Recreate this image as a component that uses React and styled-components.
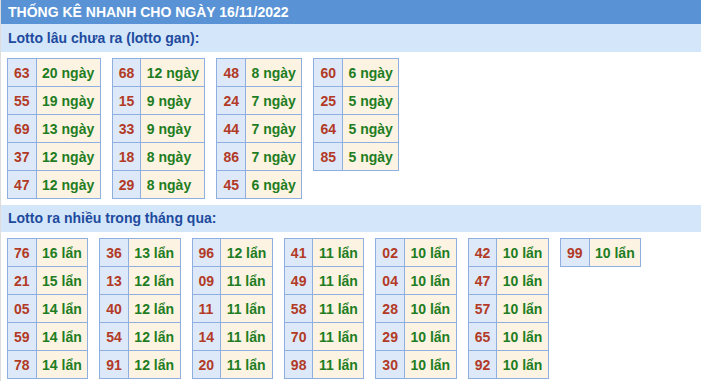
import React from 'react';
import styled, { createGlobalStyle } from 'styled-components';

const GlobalStyle = createGlobalStyle`
  body {
    margin: 0;
    background: #fff;
    font-family: "Liberation Sans", Arial, sans-serif;
  }
`

const Wrapper = styled.div`
  width: 701px;
  border-left: 1px solid #dcdcdc;
  box-sizing: border-box;
`

const Header = styled.div`
  height: 24px;
  line-height: 24px;
  padding-left: 7px;
  background: #5993d5;
  color: #fff;
  font-size: 14px;
  font-weight: bold;
  text-transform: uppercase;
`

const SectionTitle = styled.div`
  height: ${({ h }) => h || 28}px;
  line-height: ${({ h }) => h || 28}px;
  padding-left: 7px;
  background: #d4e6f9;
  color: #1e4b9e;
  font-size: 14px;
  font-weight: bold;
`

const Tables = styled.div`
  display: flex;
  flex-wrap: wrap;
  align-items: flex-start;
  gap: 11px;
  padding: 6px 0 6px 6px;
`

const Table = styled.table`
  border-collapse: collapse;
  font-size: 14px;
  font-weight: bold;
`

const Cell = styled.td`
  height: 27px;
  padding: 0 ${({ num }) => (num ? 6 : 5.5)}px;
  border: 1px solid #8eafe0;
  white-space: nowrap;
  background: ${({ num }) => (num ? '#dde9f9' : '#fdf3e2')};
  color: ${({ num }) => (num ? '#b23a26' : '#1e7d22')};
`

const gan = [
  [['63', 20], ['55', 19], ['69', 13], ['37', 12], ['47', 12]],
  [['68', 12], ['15', 9], ['33', 9], ['18', 8], ['29', 8]],
  [['48', 8], ['24', 7], ['44', 7], ['86', 7], ['45', 6]],
  [['60', 6], ['25', 5], ['64', 5], ['85', 5]],
]

const nhieu = [
  [['76', 16], ['21', 15], ['05', 14], ['59', 14], ['78', 14]],
  [['36', 13], ['13', 12], ['40', 12], ['54', 12], ['91', 12]],
  [['96', 12], ['09', 11], ['11', 11], ['14', 11], ['20', 11]],
  [['41', 11], ['49', 11], ['58', 11], ['70', 11], ['98', 11]],
  [['02', 10], ['04', 10], ['28', 10], ['29', 10], ['30', 10]],
  [['42', 10], ['47', 10], ['57', 10], ['65', 10], ['92', 10]],
  [['99', 10]],
]

const StatTable = ({ rows, unit }) => (
  <Table>
    <tbody>
      {rows.map(([num, count]) => (
        <tr key={num}>
          <Cell num>{num}</Cell>
          <Cell>{count} {unit}</Cell>
        </tr>
      ))}
    </tbody>
  </Table>
)

const App = () => {
  return (
    <Wrapper>
      <GlobalStyle />
      <Header>Thống kê nhanh cho ngày 16/11/2022</Header>
      <SectionTitle>Lotto lâu chưa ra (lotto gan):</SectionTitle>
      <Tables>
        {gan.map((rows, i) => (
          <StatTable key={i} rows={rows} unit="ngày" />
        ))}
      </Tables>
      <SectionTitle h={27}>Lotto ra nhiều trong tháng qua:</SectionTitle>
      <Tables>
        {nhieu.map((rows, i) => (
          <StatTable key={i} rows={rows} unit="lẩn" />
        ))}
      </Tables>
    </Wrapper>
  );
}

export default App;
